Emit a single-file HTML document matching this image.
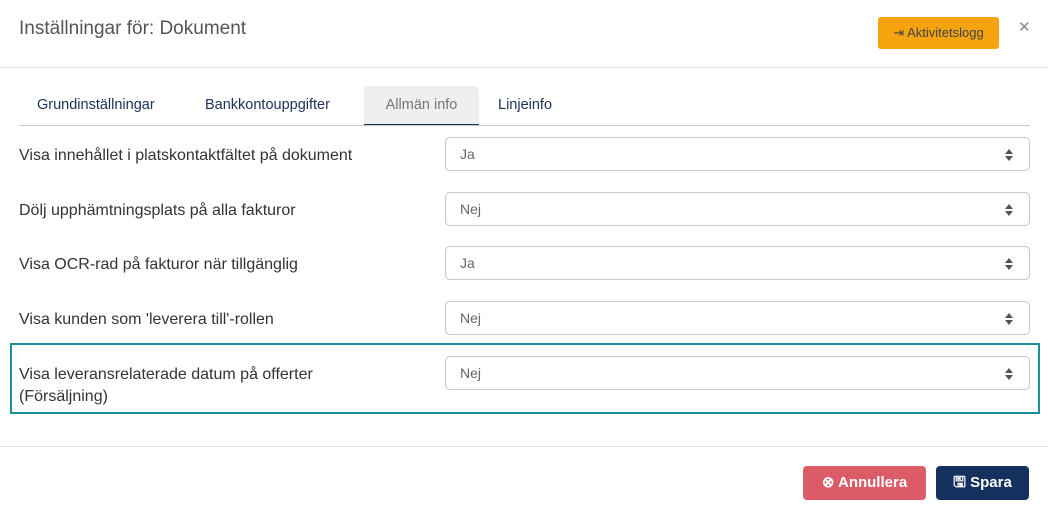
<!DOCTYPE html>
<html><head><meta charset="utf-8"><style>
*{box-sizing:border-box}
body{margin:0;width:1048px;height:518px;background:#fff;font-family:"Liberation Sans",sans-serif;color:#333;position:relative;overflow:hidden}
.abs{position:absolute}
.title{left:19px;top:18px;font-size:19px;color:#555}
.hl{left:0;width:1048px;height:1px;background:#dedede}
.btn-o{left:878px;top:17px;width:121px;height:32px;background:#f5a30f;border-radius:3px;font-size:13px;color:#444;line-height:32px;text-align:center}
.x{left:1018px;top:18px;font-size:15px;color:#888}
.tab{top:86px;height:40px;line-height:38px;font-size:14.5px;color:#1c3158}
.tab.act{background:#efefef;color:#777;border-bottom:2px solid #13305f;border-radius:4px 4px 0 0}
.lbl{left:19px;font-size:16px;color:#333;line-height:22px}
.sel{left:445px;width:585px;height:34px;border:1px solid #c4c4cc;border-radius:5px;font-size:14px;color:#666;line-height:32px;padding-left:14px}
.sel:after{content:"";position:absolute;right:16px;top:11px;border:4px solid transparent;border-bottom:5px solid #555;border-top:0}
.sel:before{content:"";position:absolute;right:16px;top:18px;border:4px solid transparent;border-top:5px solid #555;border-bottom:0}
.b{top:466px;height:34px;border-radius:4px;color:#fff;font-size:15px;font-weight:bold;line-height:34px;text-align:center}
</style></head><body>
<div class="abs title">Inställningar för: Dokument</div>
<div class="abs btn-o">⇥ Aktivitetslogg</div>
<div class="abs x">✕</div>
<div class="abs hl" style="top:67px"></div>
<div class="abs tab" style="left:37px">Grundinställningar</div>
<div class="abs tab" style="left:205px">Bankkontouppgifter</div>
<div class="abs tab act" style="left:364px;width:115px;text-align:center">Allmän info</div>
<div class="abs tab" style="left:498px">Linjeinfo</div>
<div class="abs hl" style="top:125px;left:19px;width:1011px;background:#c8c8c8"></div>

<div class="abs lbl" style="top:145px">Visa innehållet i platskontaktfältet på dokument</div>
<div class="abs sel" style="top:137px">Ja</div>
<div class="abs lbl" style="top:200px">Dölj upphämtningsplats på alla fakturor</div>
<div class="abs sel" style="top:192px">Nej</div>
<div class="abs lbl" style="top:254px">Visa OCR-rad på fakturor när tillgänglig</div>
<div class="abs sel" style="top:246px">Ja</div>
<div class="abs lbl" style="top:309px">Visa kunden som 'leverera till'-rollen</div>
<div class="abs sel" style="top:301px">Nej</div>
<div class="abs" style="left:10px;top:343px;width:1030px;height:71px;border:2px solid #1a9097"></div>
<div class="abs lbl" style="top:364px">Visa leveransrelaterade datum på offerter<br>(Försäljning)</div>
<div class="abs sel" style="top:356px">Nej</div>

<div class="abs hl" style="top:446px"></div>
<div class="abs b" style="left:803px;width:123px;background:#db5c67">⊗ Annullera</div>
<div class="abs b" style="left:936px;width:93px;background:#13305f">🖫 Spara</div>
</body></html>
